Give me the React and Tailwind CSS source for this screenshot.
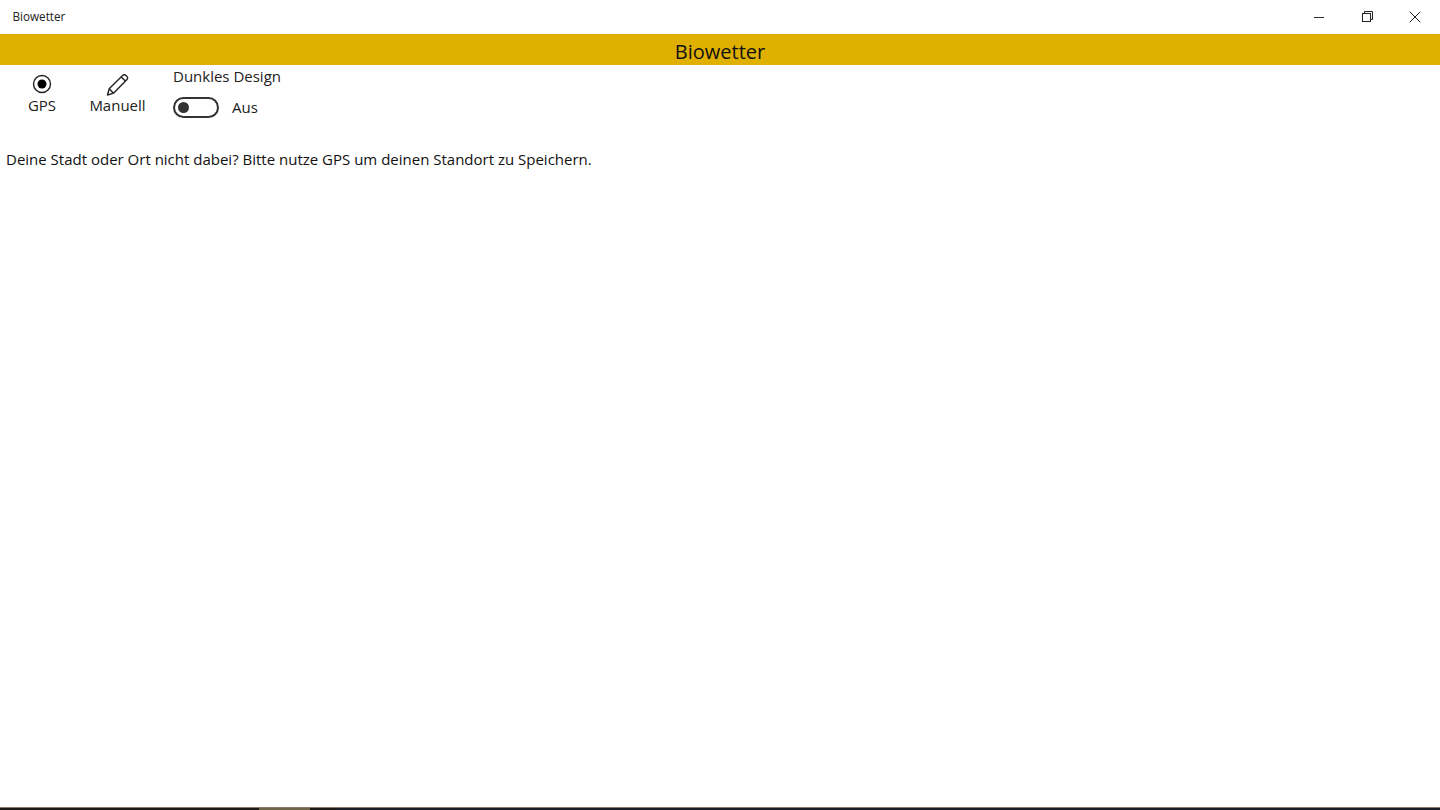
// Biowetter settings page
const WindowControls = () => (
  <div className="-mt-[1px] flex h-full pr-[1px]">
    <button className="flex h-full w-12 items-center justify-center">
      <svg width="12" height="12" viewBox="0 0 12 12" fill="none" stroke="#333" strokeWidth="1">
        <path d="M1 6.500h10" />
      </svg>
    </button>
    <button className="flex h-full w-12 items-center justify-center">
      <svg width="13" height="13" viewBox="0 0 13 13" fill="none" stroke="#222" strokeWidth="1">
        <rect x="1.500" y="3.500" width="8" height="8" />
        <path d="M3.500 3.500v-2h8v8h-2" />
      </svg>
    </button>
    <button className="flex h-full w-12 items-center justify-center">
      <svg width="12" height="12" viewBox="0 0 12 12" fill="none" stroke="#222" strokeWidth="1">
        <path d="M.7.7l10.600 10.600M11.300.7L.7 11.300" />
      </svg>
    </button>
  </div>
);

const GpsIcon = () => (
  <svg width="20" height="20" viewBox="0 0 20 20" fill="none">
    <circle cx="10" cy="10" r="8.500" stroke="#222" strokeWidth="1.400" />
    <circle cx="10" cy="10" r="4.500" fill="#000" />
  </svg>
);

const PencilIcon = () => (
  <svg width="24" height="22" viewBox="0 0 24 22" fill="none" stroke="#222" strokeWidth="1.400" strokeLinejoin="round">
    <path d="M1.500 21l1.700-6.300L16.800 1.300a2 2 0 0 1 2.900 0l1.300 1.300a2 2 0 0 1 0 2.900L7.500 19.200z" />
    <path d="M3.200 14.700l4.300 4.500M15.200 2.900l4.200 4.200" />
  </svg>
);

const App = () => {
  return (
    <div className="flex h-[810px] w-[1440px] flex-col overflow-hidden bg-white font-['Open_Sans',sans-serif] text-black">
      {/* Title bar */}
      <div className="flex h-[34px] items-center justify-between pl-[12.500px]">
        <span className="text-[11.700px] text-[#222]">Biowetter</span>
        <WindowControls />
      </div>

      {/* Yellow header */}
      <div className="flex h-[31px] items-center justify-center bg-[#e0b000] pt-[5px] text-[20px] text-[#111]">
        Biowetter
      </div>

      {/* Toolbar */}
      <div className="flex h-[59px] items-start pl-[6px] text-[15px] text-[#222]">
        <div className="mt-[9px] flex w-[72px] flex-col items-center">
          <GpsIcon />
          <span className="-mt-[1px] leading-[24px]">GPS</span>
        </div>
        <div className="mt-[9px] ml-[5px] flex w-[70px] flex-col items-center">
          <PencilIcon />
          <span className="-mt-[3px] -ml-[1px] leading-[24px]">Manuell</span>
        </div>
        <div className="ml-[20px] flex flex-col">
          <span className="leading-[22px]">Dunkles Design</span>
          <div className="mt-[9px] flex items-center">
            <div className="flex h-[21px] w-[46px] items-center rounded-full border-2 border-[#333] pl-[3px]">
              <div className="h-[11px] w-[11px] rounded-full bg-[#333]" />
            </div>
            <span className="ml-[13px]">Aus</span>
          </div>
        </div>
      </div>

      {/* Hint */}
      <p className="mt-[24px] pl-[6px] text-[15px] leading-[22px] text-[#111]">
        Deine Stadt oder Ort nicht dabei? Bitte nutze GPS um deinen Standort zu Speichern.
      </p>

      {/* Bottom edge */}
      <div className="mt-auto flex h-[3px] border-t border-[#8a7f66]">
        <div className="h-full w-[259px] bg-[#1d1a14]" />
        <div className="h-full w-[51px] bg-[#6e6447]" />
        <div className="h-full w-[26px] bg-[#1d1a14]" />
        <div className="h-full flex-1 bg-[#1b1c25]" />
      </div>
    </div>
  );
};

export default App;
